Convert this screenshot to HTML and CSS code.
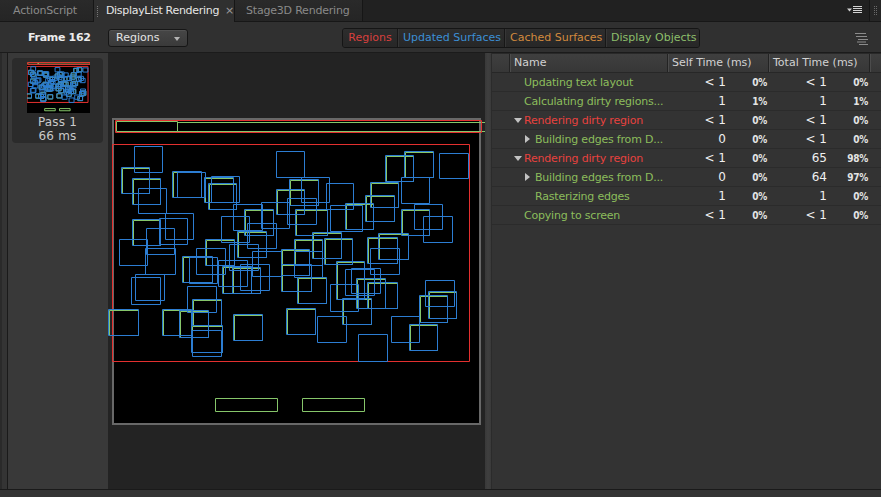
FILE: index.html
```html
<!DOCTYPE html>
<html>
<head>
<meta charset="utf-8">
<title>DisplayList Rendering</title>
<link rel="stylesheet" href="styles.css">
</head>
<body>
<div class="app">
  <div class="tabbar">
    <div class="tab tab-as">ActionScript</div>
    <div class="tab active"><span class="grip"></span>DisplayList Rendering<span class="close">×</span></div>
    <div class="tab tab-s3d">Stage3D Rendering</div>
    <div class="tabfill">
      <svg class="panelmenu" width="15" height="8" viewBox="0 0 15 8">
        <path d="M0 2.5h5l-2.5 3z" fill="#cfcfcf"/>
        <path d="M6 0.5h9M6 2.5h9M6 4.5h9M6 6.5h9" stroke="#d4d4d4" stroke-width="1"/>
      </svg>
    </div>
    <div class="tabgrip"><span class="dots"></span></div>
  </div>

  <div class="toolbar">
    <span class="frame">Frame 162</span>
    <div class="dropdown">Regions<span class="caret"></span></div>
    <div class="seg">
      <span class="seg-item s-red">Regions</span>
      <span class="seg-item s-blue">Updated Surfaces</span>
      <span class="seg-item s-orange">Cached Surfaces</span>
      <span class="seg-item s-green">Display Objects</span>
    </div>
    <svg class="listicon" width="13" height="12" viewBox="0 0 13 12">
      <path d="M0 0.5h11M1 3.5h11M3 6.5h10M2 9h9M4 11.5h9" stroke="#8c8c8c" stroke-width="1"/>
    </svg>
  </div>

  <div class="main">
    <div class="passes">
      <div class="pass-card">
        <svg class="thumb" width="63" height="52" viewBox="112 118 369 307" preserveAspectRatio="none">
          <rect x="112" y="118" width="369" height="307" fill="#000"/>
          <use href="#art"/>
        </svg>
        <div class="pass-label">Pass 1</div>
        <div class="pass-label">66 ms</div>
      </div>
    </div>

    <div class="canvas-pane">
      <svg class="stage" width="377" height="436" viewBox="108 53 377 436">
        <rect x="113" y="119" width="367" height="305" fill="#000" stroke="#686868" stroke-width="2"/>
        <g id="art" class="art">
          <rect class="gr" x="116.5" y="121.5" width="61" height="10"/>
          <rect class="gr" x="177.5" y="122.5" width="400" height="9"/>
          <rect class="r" x="115.5" y="120.5" width="366" height="12"/>
          <rect class="r" x="112.5" y="144.5" width="357" height="217"/>
          <g class="gr" transform="translate(1.5 1.5)">
            <rect x="121" y="167" width="27" height="25"/>
            <rect x="132" y="178" width="27" height="25"/>
            <rect x="172" y="171" width="28" height="25"/>
            <rect x="204" y="177" width="28" height="24"/>
            <rect x="208" y="183" width="27" height="25"/>
            <rect x="289" y="179" width="28" height="25"/>
            <rect x="276" y="189" width="27" height="24"/>
            <rect x="370" y="182" width="27" height="24"/>
            <rect x="385" y="155" width="27" height="25"/>
            <rect x="404" y="151" width="28" height="25"/>
            <rect x="365" y="195" width="28" height="25"/>
            <rect x="401" y="209" width="27" height="25"/>
            <rect x="244" y="209" width="28" height="25"/>
            <rect x="295" y="209" width="31" height="25"/>
            <rect x="345" y="203" width="27" height="25"/>
            <rect x="132" y="219" width="27" height="25"/>
            <rect x="182" y="256" width="29" height="25"/>
            <rect x="205" y="239" width="28" height="25"/>
            <rect x="222" y="266" width="28" height="26"/>
            <rect x="232" y="267" width="27" height="25"/>
            <rect x="237" y="231" width="28" height="25"/>
            <rect x="281" y="249" width="27" height="25"/>
            <rect x="294" y="239" width="27" height="25"/>
            <rect x="281" y="264" width="29" height="26"/>
            <rect x="297" y="277" width="28" height="25"/>
            <rect x="312" y="232" width="28" height="25"/>
            <rect x="324" y="238" width="27" height="25"/>
            <rect x="336" y="261" width="27" height="37"/>
            <rect x="342" y="298" width="28" height="25"/>
            <rect x="356" y="278" width="28" height="29"/>
            <rect x="367" y="282" width="29" height="25"/>
            <rect x="367" y="237" width="29" height="25"/>
            <rect x="378" y="233" width="29" height="25"/>
            <rect x="419" y="295" width="27" height="26"/>
            <rect x="428" y="291" width="27" height="26"/>
            <rect x="409" y="324" width="27" height="25"/>
            <rect x="286" y="308" width="28" height="25"/>
            <rect x="233" y="314" width="28" height="25"/>
            <rect x="192" y="299" width="28" height="25"/>
            <rect x="179" y="310" width="28" height="26"/>
            <rect x="162" y="309" width="28" height="25"/>
            <rect x="191" y="325" width="30" height="26"/>
            <rect x="108" y="309" width="29" height="25"/>
          </g>
          <g class="bl" transform="translate(0.5 0.5)">
            <rect x="134" y="146" width="28" height="26"/>
            <rect x="121" y="167" width="28" height="26"/>
            <rect x="132" y="178" width="28" height="26"/>
            <rect x="138" y="188" width="28" height="25"/>
            <rect x="172" y="171" width="29" height="26"/>
            <rect x="177" y="172" width="28" height="25"/>
            <rect x="204" y="177" width="29" height="25"/>
            <rect x="211" y="176" width="28" height="26"/>
            <rect x="208" y="183" width="28" height="26"/>
            <rect x="276" y="151" width="28" height="26"/>
            <rect x="289" y="179" width="29" height="26"/>
            <rect x="301" y="177" width="28" height="25"/>
            <rect x="276" y="189" width="28" height="25"/>
            <rect x="326" y="183" width="27" height="26"/>
            <rect x="370" y="182" width="28" height="25"/>
            <rect x="385" y="155" width="28" height="26"/>
            <rect x="404" y="151" width="29" height="26"/>
            <rect x="439" y="153" width="29" height="25"/>
            <rect x="401" y="177" width="28" height="26"/>
            <rect x="365" y="195" width="29" height="26"/>
            <rect x="414" y="204" width="28" height="25"/>
            <rect x="423" y="216" width="29" height="26"/>
            <rect x="401" y="209" width="28" height="26"/>
            <rect x="221" y="216" width="28" height="26"/>
            <rect x="233" y="204" width="29" height="26"/>
            <rect x="244" y="209" width="29" height="26"/>
            <rect x="261" y="202" width="28" height="26"/>
            <rect x="287" y="198" width="29" height="26"/>
            <rect x="295" y="209" width="32" height="26"/>
            <rect x="330" y="205" width="32" height="26"/>
            <rect x="345" y="203" width="28" height="26"/>
            <rect x="132" y="219" width="28" height="26"/>
            <rect x="165" y="213" width="28" height="26"/>
            <rect x="159" y="218" width="28" height="26"/>
            <rect x="146" y="228" width="28" height="26"/>
            <rect x="119" y="239" width="28" height="26"/>
            <rect x="145" y="248" width="30" height="26"/>
            <rect x="182" y="256" width="30" height="26"/>
            <rect x="189" y="257" width="28" height="26"/>
            <rect x="196" y="248" width="29" height="26"/>
            <rect x="205" y="239" width="29" height="26"/>
            <rect x="218" y="260" width="29" height="26"/>
            <rect x="222" y="266" width="29" height="27"/>
            <rect x="232" y="267" width="28" height="26"/>
            <rect x="240" y="264" width="29" height="26"/>
            <rect x="229" y="244" width="29" height="26"/>
            <rect x="237" y="231" width="29" height="26"/>
            <rect x="252" y="251" width="29" height="25"/>
            <rect x="247" y="223" width="29" height="25"/>
            <rect x="281" y="249" width="28" height="26"/>
            <rect x="294" y="239" width="28" height="26"/>
            <rect x="294" y="251" width="28" height="26"/>
            <rect x="281" y="264" width="30" height="27"/>
            <rect x="297" y="277" width="29" height="26"/>
            <rect x="312" y="232" width="29" height="26"/>
            <rect x="324" y="238" width="28" height="26"/>
            <rect x="336" y="261" width="28" height="38"/>
            <rect x="330" y="284" width="28" height="27"/>
            <rect x="342" y="298" width="29" height="26"/>
            <rect x="345" y="269" width="29" height="26"/>
            <rect x="351" y="268" width="29" height="25"/>
            <rect x="356" y="278" width="29" height="30"/>
            <rect x="367" y="282" width="30" height="26"/>
            <rect x="367" y="237" width="30" height="26"/>
            <rect x="378" y="233" width="30" height="26"/>
            <rect x="370" y="248" width="29" height="26"/>
            <rect x="425" y="280" width="29" height="26"/>
            <rect x="419" y="295" width="28" height="27"/>
            <rect x="428" y="291" width="28" height="27"/>
            <rect x="391" y="316" width="28" height="26"/>
            <rect x="409" y="324" width="28" height="26"/>
            <rect x="358" y="334" width="29" height="27"/>
            <rect x="317" y="316" width="29" height="26"/>
            <rect x="286" y="308" width="29" height="26"/>
            <rect x="233" y="314" width="29" height="26"/>
            <rect x="187" y="286" width="29" height="26"/>
            <rect x="192" y="299" width="29" height="26"/>
            <rect x="179" y="310" width="29" height="27"/>
            <rect x="162" y="309" width="29" height="26"/>
            <rect x="191" y="325" width="31" height="27"/>
            <rect x="192" y="330" width="29" height="26"/>
            <rect x="108" y="309" width="30" height="26"/>
            <rect x="135" y="274" width="29" height="26"/>
            <rect x="131" y="277" width="29" height="27"/>
          </g>
          <rect class="gr" x="215.5" y="398.5" width="62" height="13"/>
          <rect class="gr" x="302.5" y="398.5" width="62" height="13"/>
        </g>
      </svg>
    </div>

    <div class="splitter"></div>

    <div class="tree">
      <div class="thead">
        <div class="th th-lead"></div>
        <div class="th th-name">Name</div>
        <div class="th th-time">Self Time (ms)</div>
        <div class="th th-time">Total Time (ms)</div>
        <div class="th th-end"></div>
      </div>
      <div class="row">
        <div class="name lvl0 green"><span class="tw"></span>Updating text layout</div>
        <div class="val">&lt; 1</div><div class="pct">0%</div>
        <div class="val">&lt; 1</div><div class="pct">0%</div>
      </div>
      <div class="row">
        <div class="name lvl0 green"><span class="tw"></span>Calculating dirty regions...</div>
        <div class="val">1</div><div class="pct">1%</div>
        <div class="val">1</div><div class="pct">1%</div>
      </div>
      <div class="row">
        <div class="name lvl0 red"><span class="tw"><span class="tri-down"></span></span>Rendering dirty region</div>
        <div class="val">&lt; 1</div><div class="pct">0%</div>
        <div class="val">&lt; 1</div><div class="pct">0%</div>
      </div>
      <div class="row">
        <div class="name lvl1 green"><span class="tw"><span class="tri-right"></span></span>Building edges from D...</div>
        <div class="val">0</div><div class="pct">0%</div>
        <div class="val">&lt; 1</div><div class="pct">0%</div>
      </div>
      <div class="row">
        <div class="name lvl0 red"><span class="tw"><span class="tri-down"></span></span>Rendering dirty region</div>
        <div class="val">&lt; 1</div><div class="pct">0%</div>
        <div class="val">65</div><div class="pct">98%</div>
      </div>
      <div class="row">
        <div class="name lvl1 green"><span class="tw"><span class="tri-right"></span></span>Building edges from D...</div>
        <div class="val">0</div><div class="pct">0%</div>
        <div class="val">64</div><div class="pct">97%</div>
      </div>
      <div class="row">
        <div class="name lvl1 green"><span class="tw"></span>Rasterizing edges</div>
        <div class="val">1</div><div class="pct">0%</div>
        <div class="val">1</div><div class="pct">0%</div>
      </div>
      <div class="row">
        <div class="name lvl0 green"><span class="tw"></span>Copying to screen</div>
        <div class="val">&lt; 1</div><div class="pct">0%</div>
        <div class="val">&lt; 1</div><div class="pct">0%</div>
      </div>
    </div>
  </div>

  <div class="statusbar"></div>
</div>
</body>
</html>
```

FILE: styles.css
```css
* { box-sizing: border-box; margin: 0; padding: 0; }

html, body {
  width: 881px;
  height: 497px;
  overflow: hidden;
}

body {
  background: #343434;
  font-family: "DejaVu Sans", "Liberation Sans", sans-serif;
  font-size: 11px;
  color: #ddd;
}

.app {
  display: flex;
  flex-direction: column;
  height: 497px;
  border-left: 2px solid #2a2a2a;
}

/* ---------- tab bar ---------- */
.tabbar {
  height: 22px;
  display: flex;
  background: #212121;
  margin-left: -2px;
}

.tab {
  height: 22px;
  line-height: 22px;
  padding-left: 13px;
  color: #8a8a8a;
  background: linear-gradient(#2a2a2a, #252525);
  border-right: 1px solid #161616;
  border-bottom: 1px solid #171717;
  white-space: nowrap;
  letter-spacing: -0.2px;
}

.tab-as { width: 94px; }
.tab-s3d { width: 128px; padding-left: 11px; }

.tab.active {
  width: 141px;
  padding-left: 3px;
  background: #303030;
  color: #e6e6e6;
  border-bottom: none;
  display: flex;
  align-items: center;
  letter-spacing: -0.3px;
}

.grip {
  width: 3px;
  height: 11px;
  margin-right: 7px;
  background-image:
    repeating-linear-gradient(#777 0 1px, transparent 1px 2px),
    repeating-linear-gradient(#777 0 1px, transparent 1px 2px);
  background-size: 1px 100%;
  background-position: 0 0, 2px 1px;
  background-repeat: no-repeat;
}

.close {
  margin-left: 6px;
  color: #9a9a9a;
  font-size: 11px;
}

.tabfill {
  flex: 1;
  border-bottom: 1px solid #171717;
  display: flex;
  align-items: center;
  justify-content: flex-end;
  padding-right: 7px;
}

.panelmenu { margin-top: -1px; }

.tabgrip {
  width: 12px;
  border-left: 1px solid #161616;
  border-bottom: 1px solid #171717;
  display: flex;
  align-items: center;
  justify-content: center;
  background: #262626;
}

.dots {
  width: 3px;
  height: 10px;
  background-image:
    repeating-linear-gradient(#6a6a6a 0 1px, transparent 1px 2px),
    repeating-linear-gradient(#6a6a6a 0 1px, transparent 1px 2px);
  background-size: 1px 100%;
  background-position: 0 0, 2px 0;
  background-repeat: no-repeat;
}

/* ---------- toolbar ---------- */
.toolbar {
  height: 31px;
  background: #303030;
  border-bottom: 1px solid #1b1b1b;
  display: flex;
  align-items: center;
  margin-left: -2px;
  padding-top: 1px;
}

.frame {
  width: 108px;
  padding-left: 28px;
  font-weight: bold;
  color: #ececec;
  letter-spacing: -0.3px;
}

.dropdown {
  position: relative;
  width: 80px;
  height: 18px;
  line-height: 16px;
  padding-left: 7px;
  border: 1px solid #161616;
  border-radius: 3px;
  background: linear-gradient(#464646, #3a3a3a);
  color: #e4e4e4;
  box-shadow: inset 0 1px 0 #525252;
}

.caret {
  position: absolute;
  right: 7px;
  top: 7px;
  width: 0;
  height: 0;
  border-left: 3.5px solid transparent;
  border-right: 3.5px solid transparent;
  border-top: 4px solid #b4b4b4;
}

.seg {
  margin-left: 154px;
  display: flex;
  height: 20px;
  border: 1px solid #151515;
  border-radius: 3px;
  background: #2a2a2a;
  overflow: hidden;
}

.seg-item {
  line-height: 18px;
  padding: 0 5px;
  border-left: 1px solid #171717;
  box-shadow: inset 1px 0 0 #363636;
  background: linear-gradient(#2d2d2d, #272727);
  white-space: nowrap;
  text-align: center;
}

.seg-item:first-child { border-left: none; box-shadow: none; }
.s-red { width: 54px; color: #d8403e; }
.s-blue { width: 107px; color: #3c8fd5; }
.s-orange { width: 101px; color: #d38a3e; }
.s-green { width: 94px; color: #8dbf6b; }

.listicon {
  margin-left: auto;
  margin-right: 13px;
  margin-top: 2px;
}

/* ---------- main ---------- */
.main {
  height: 436px;
  display: flex;
  margin-left: 5px;
  border-left: 1px solid #1a1a1a;
}

.passes {
  width: 100px;
  background: #393939;
  padding: 5px 4px;
}

.pass-card {
  width: 91px;
  height: 85px;
  background: #2b2b2b;
  border-radius: 4px;
  padding-top: 4px;
  display: flex;
  flex-direction: column;
  align-items: center;
}

.thumb {
  display: block;
  margin-left: 1px;
  margin-bottom: 2px;
}

.pass-label {
  color: #c9c9c9;
  font-size: 12px;
  line-height: 14px;
  letter-spacing: 0.2px;
}

.canvas-pane {
  width: 377px;
  background: #232323;
  overflow: hidden;
}

.stage { display: block; }

.art rect {
  fill: none;
  vector-effect: non-scaling-stroke;
  stroke-width: 1;
}

.art .r { stroke: #e3302f; }
.art .gr, .art .gr rect { stroke: #86c66a; }
.art .bl rect { stroke: #2c7dd2; }

.splitter {
  width: 7px;
  background: linear-gradient(to right, #383838, #3f3f3f 50%, #3a3a3a);
  border-right: 1px solid #2b2b2b;
}

/* ---------- tree table ---------- */
.tree {
  flex: 1;
  background: #333;
}

.thead {
  height: 20px;
  display: flex;
  background: linear-gradient(#3f3f3f, #373737);
  border-top: 1px solid #292929;
  border-bottom: 1px solid #272727;
}

.th {
  line-height: 18px;
  color: #d2d2d2;
  padding-left: 4px;
  white-space: nowrap;
  border-left: 1px solid #232323;
  box-shadow: inset 1px 0 0 #4c4c4c;
}

.th-lead { width: 17px; border-left: none; box-shadow: none; }
.th-name { width: 158px; }
.th-time { width: 101px; }
.th-end { flex: 1; }

.row {
  height: 19px;
  display: grid;
  grid-template-columns: 175px 59px 41px 60px 41px;
  align-items: center;
  border-bottom: 1px solid #2b2b2b;
}

.name {
  display: flex;
  align-items: center;
  white-space: nowrap;
  overflow: hidden;
  letter-spacing: -0.2px;
}

.lvl0 { padding-left: 22px; }
.lvl1 { padding-left: 33px; }

.tw {
  width: 10px;
  display: flex;
  align-items: center;
}

.tri-down {
  width: 0;
  height: 0;
  border-left: 4px solid transparent;
  border-right: 4px solid transparent;
  border-top: 5px solid #c2c2c2;
}

.tri-right {
  width: 0;
  height: 0;
  border-top: 4px solid transparent;
  border-bottom: 4px solid transparent;
  border-left: 5px solid #c2c2c2;
}

.green { color: #8cbd5c; }
.red { color: #e8423f; }

.val {
  text-align: right;
  color: #f0f0f0;
  font-size: 12px;
}

.pct {
  text-align: right;
  color: #e4e4e4;
  font-family: "DejaVu Sans Condensed", "DejaVu Sans", sans-serif;
  font-stretch: condensed;
  font-weight: bold;
  font-size: 10px;
  letter-spacing: -0.3px;
}

.statusbar {
  height: 8px;
  border-top: 1px solid #1a1a1a;
  background: #343434;
  margin-left: -2px;
}
```
